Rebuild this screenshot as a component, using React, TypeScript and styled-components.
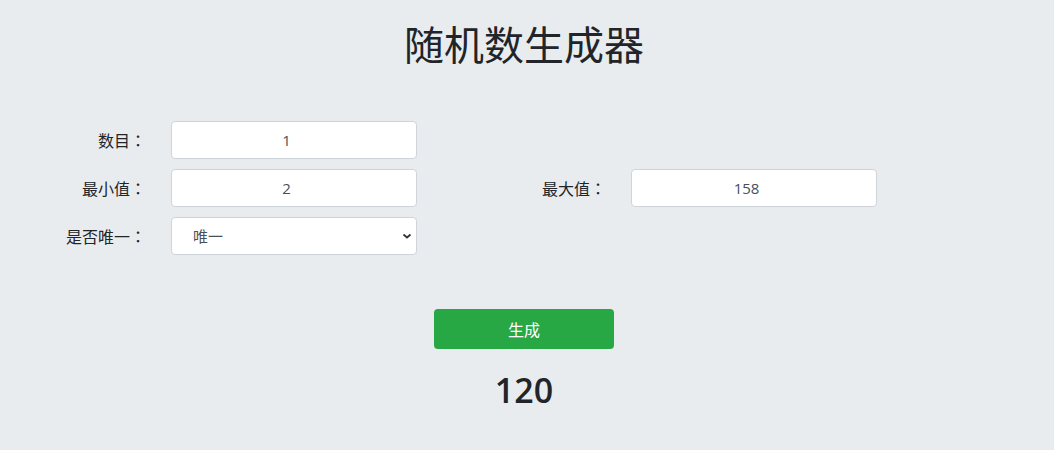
import styled, { createGlobalStyle } from "styled-components";

const GlobalStyle = createGlobalStyle`
  html, body {
    margin: 0;
    padding: 0;
    background: #e9ecef;
  }
  body {
    font-family: "Open Sans", "Noto Sans CJK SC", sans-serif;
    color: #212529;
  }
`;

const Page = styled.div`
  width: 1048px;
  padding-top: 21px;
  display: flex;
  flex-direction: column;
  align-items: center;
`;

const Title = styled.h1`
  margin: 0;
  font-size: 40px;
  font-weight: 400;
  line-height: 48px;
`;

const Form = styled.div`
  align-self: stretch;
  margin-top: 52px;
  display: grid;
  grid-template-columns: 146px 246px 164px 246px;
  column-gap: 25px;
  row-gap: 10px;
`;

const Label = styled.label<{ $col: number }>`
  grid-column: ${(p) => p.$col};
  display: flex;
  align-items: center;
  justify-content: flex-end;
  font-size: 16px;
  white-space: nowrap;
`;

const Colon = styled.span`
  font-family: "Noto Sans CJK TC", sans-serif;
`;

const Field = styled.input<{ $col: number }>`
  grid-column: ${(p) => p.$col};
  box-sizing: border-box;
  height: 38px;
  width: 100%;
  border: 1px solid #ced4da;
  border-radius: 4px;
  background: #fff;
  color: #495057;
  font-family: inherit;
  font-size: 15px;
  text-align: center;
  padding: 0 15px 0 0;
  outline: none;
`;

const SelectWrap = styled.div`
  position: relative;
  grid-column: 2;
  height: 38px;
`;

const Select = styled.select`
  appearance: none;
  box-sizing: border-box;
  width: 100%;
  height: 38px;
  border: 1px solid #ced4da;
  border-radius: 4px;
  background: #fff;
  color: #495057;
  font-family: inherit;
  font-size: 15px;
  padding: 0 30px 0 21px;
  outline: none;
`;

const Chevron = styled.svg`
  position: absolute;
  right: 5px;
  top: 15px;
  pointer-events: none;
`;

const Button = styled.button`
  margin-top: 54px;
  width: 180px;
  height: 40px;
  border: none;
  border-radius: 4px;
  background: #28a745;
  color: #fff;
  font-family: inherit;
  font-size: 16px;
  cursor: pointer;
`;

const Result = styled.div`
  margin-top: 20px;
  font-size: 34px;
  font-weight: 600;
  line-height: 42px;
`;

export default function App() {
  return (
    <>
      <GlobalStyle />
      <Page>
        <Title>随机数生成器</Title>
        <Form>
          <Label $col={1}>数目<Colon>：</Colon></Label>
          <Field $col={2} defaultValue="1" />
          <Label $col={1}>最小值<Colon>：</Colon></Label>
          <Field $col={2} defaultValue="2" />
          <Label $col={3}>最大值<Colon>：</Colon></Label>
          <Field $col={4} defaultValue="158" />
          <Label $col={1}>是否唯一<Colon>：</Colon></Label>
          <SelectWrap>
            <Select defaultValue="unique">
              <option value="unique">唯一</option>
              <option value="repeat">可重复</option>
            </Select>
            <Chevron width="10" height="8" viewBox="0 0 10 8">
              <path d="M1.5 2.5 L5 5.5 L8.5 2.5" fill="none" stroke="#333" strokeWidth="1.8" />
            </Chevron>
          </SelectWrap>
        </Form>
        <Button>生成</Button>
        <Result>120</Result>
      </Page>
    </>
  );
}
